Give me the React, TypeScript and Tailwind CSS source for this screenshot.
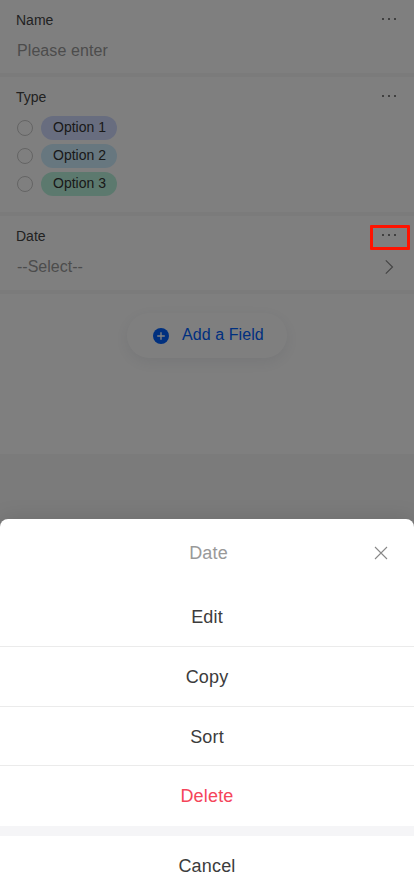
import { useState } from 'react';

const OPTIONS = [
  { label: 'Option 1', color: 'bg-[#d0dbff]' },
  { label: 'Option 2', color: 'bg-[#cfeeff]' },
  { label: 'Option 3', color: 'bg-[#b9f3dd]' },
];

const ACTIONS = [
  { label: 'Edit', className: 'h-[60px] border-b text-[#3c3c3c]' },
  { label: 'Copy', className: 'h-[60px] border-b text-[#3c3c3c]' },
  { label: 'Sort', className: 'h-[59px] border-b pt-0.5 text-[#3c3c3c]' },
  { label: 'Delete', className: 'h-[60px] text-[#f5455a]' },
];

function MoreDots() {
  return (
    <span className="flex h-4 w-3.5 items-center justify-between">
      <span className="h-0.5 w-0.5 bg-[#808080]" />
      <span className="h-0.5 w-0.5 bg-[#808080]" />
      <span className="h-0.5 w-0.5 bg-[#808080]" />
    </span>
  );
}

function FieldHeader({ title, highlighted }: { title: string; highlighted?: boolean }) {
  return (
    <div className="flex h-5 items-center justify-between pr-[18px] pl-4">
      <span className="text-sm text-[#444]">{title}</span>
      <button className="relative -mt-0.5 flex h-4 items-center">
        <MoreDots />
        {highlighted && (
          <span className="absolute -top-[2px] -left-[12px] z-20 h-[25px] w-10 rounded-[1px] border-[3px] border-[#ff1300]" />
        )}
      </button>
    </div>
  );
}

export default function App() {
  const [open, setOpen] = useState(true);

  return (
    <div className="relative flex h-[896px] w-[414px] flex-col overflow-hidden bg-[#f7f7f7] font-['Liberation_Sans',Arial,sans-serif]">
      {/* Form fields */}
      <section className="h-[73px] bg-white pt-2.5">
        <FieldHeader title="Name" />
        <div className="mt-[9px] pl-[17px] text-base leading-6 tracking-[0.005em] text-[#999]">Please enter</div>
      </section>

      <section className="mt-1 h-[135px] bg-white pt-2.5">
        <FieldHeader title="Type" />
        <div className="mt-[9px] flex flex-col gap-1 pl-[17px]">
          {OPTIONS.map((option) => (
            <div key={option.label} className="flex h-6 items-center gap-2">
              <span className="h-4 w-4 rounded-full border border-[#c8c8c8]" />
              <span
                className={`h-6 w-[76px] rounded-full pl-3 text-sm leading-[23px] text-[#333] ${option.color}`}
              >
                {option.label}
              </span>
            </div>
          ))}
        </div>
      </section>

      <section className="mt-1 h-[74px] bg-white pt-2.5">
        <FieldHeader title="Date" highlighted />
        <div className="mt-[9px] flex items-center justify-between pr-5 pl-[17px] text-base leading-6 text-[#999]">
          <span>--Select--</span>
          <svg className="-mt-px h-4 w-2.5" viewBox="0 0 10 16" fill="none" stroke="#888" strokeWidth="1.2">
            <path d="M1.8 1.3L8.5 8L1.8 14.7" />
          </svg>
        </div>
      </section>

      <section className="mt-1 flex h-40 justify-center bg-white pt-[19px]">
        <button className="flex h-[45px] w-40 items-center rounded-full bg-white pl-[26px] shadow-[0_4px_16px_rgba(40,60,90,0.09)]">
          <svg className="mt-px h-4 w-4" viewBox="0 0 16 16" fill="none">
            <circle cx="8" cy="8" r="8" fill="#0060ff" />
            <path d="M8 4.2V11.8M4.2 8H11.8" stroke="#fff" strokeWidth="1.4" />
          </svg>
          <span className="-mt-0.5 ml-[13px] text-base tracking-[0.005em] text-[#0060ff]">Add a Field</span>
        </button>
      </section>

      {/* Action sheet */}
      {open && (
        <>
          <div className="absolute inset-0 z-10 bg-black/50" onClick={() => setOpen(false)} />
          <div className="absolute inset-x-0 bottom-0 z-10 rounded-t-lg bg-white text-lg tracking-[0.01em] text-[#3c3c3c] shadow-[0_-2px_20px_rgba(0,0,0,0.1)]">
            <header className="flex h-[68px] items-center justify-between px-[26px]">
              <span className="w-3.5" />
              <span className="ml-[3px] text-[#999]">Date</span>
              <button onClick={() => setOpen(false)}>
                <svg className="h-3.5 w-3.5" viewBox="0 0 14 14" fill="none" stroke="#888" strokeWidth="1.1">
                  <path d="M1 1L13 13M13 1L1 13" />
                </svg>
              </button>
            </header>
            {ACTIONS.map((action) => (
              <button
                key={action.label}
                className={`flex w-full items-center justify-center border-[#ebebeb] ${action.className}`}
              >
                {action.label}
              </button>
            ))}
            <div className="h-2.5 bg-[#f5f5f7]" />
            <button
              className="flex h-[60px] w-full items-center justify-center"
              onClick={() => setOpen(false)}
            >
              Cancel
            </button>
          </div>
        </>
      )}
    </div>
  );
}
